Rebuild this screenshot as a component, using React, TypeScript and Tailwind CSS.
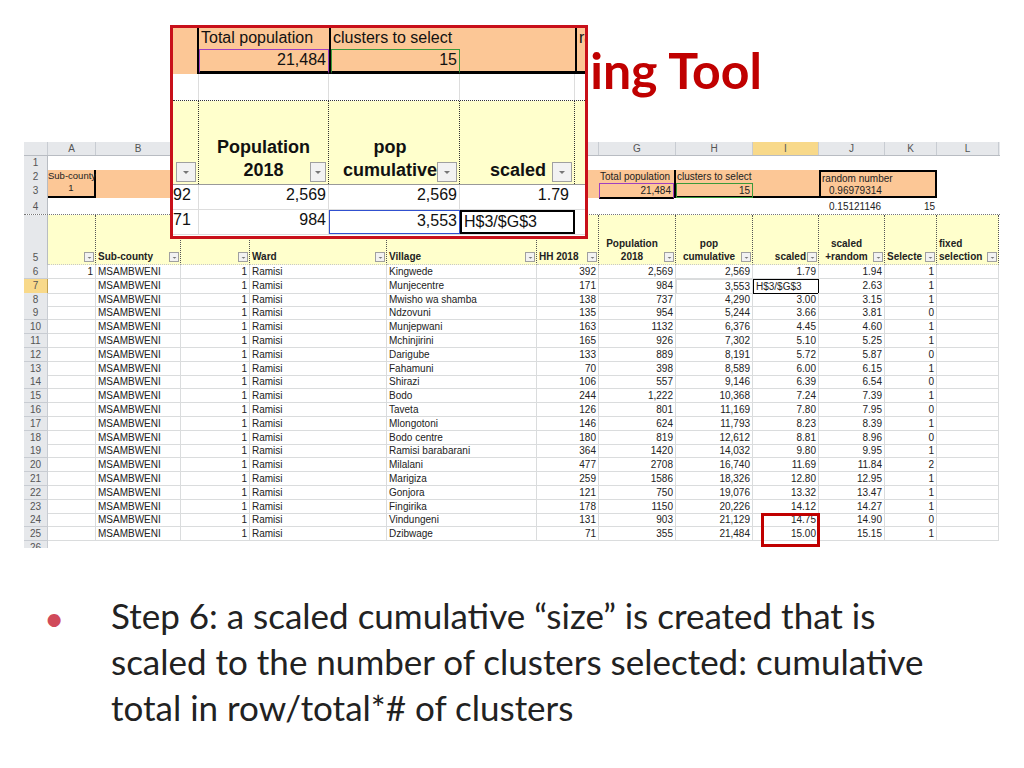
import React from "react";

const rows: string[][] = [
  ["Kingwede","392","2,569","2,569","1.79","1.94","1"],
  ["Munjecentre","171","984","3,553","","2.63","1"],
  ["Mwisho wa shamba","138","737","4,290","3.00","3.15","1"],
  ["Ndzovuni","135","954","5,244","3.66","3.81","0"],
  ["Munjepwani","163","1132","6,376","4.45","4.60","1"],
  ["Mchinjirini","165","926","7,302","5.10","5.25","1"],
  ["Darigube","133","889","8,191","5.72","5.87","0"],
  ["Fahamuni","70","398","8,589","6.00","6.15","1"],
  ["Shirazi","106","557","9,146","6.39","6.54","0"],
  ["Bodo","244","1,222","10,368","7.24","7.39","1"],
  ["Taveta","126","801","11,169","7.80","7.95","0"],
  ["Mlongotoni","146","624","11,793","8.23","8.39","1"],
  ["Bodo centre","180","819","12,612","8.81","8.96","0"],
  ["Ramisi barabarani","364","1420","14,032","9.80","9.95","1"],
  ["Milalani","477","2708","16,740","11.69","11.84","2"],
  ["Marigiza","259","1586","18,326","12.80","12.95","1"],
  ["Gonjora","121","750","19,076","13.32","13.47","1"],
  ["Fingirika","178","1150","20,226","14.12","14.27","1"],
  ["Vindungeni","131","903","21,129","14.75","14.90","0"],
  ["Dzibwage","71","355","21,484","15.00","15.15","1"],
];

const cols = "grid grid-cols-[24px_48px_85px_69px_137px_150px_62px_77px_77px_66px_66px_52px_62px]";
const cell = "border-r border-b border-[#dadcdd] px-[2px] whitespace-nowrap overflow-hidden";

function Filter({ big }: { big?: boolean }) {
  return (
    <span className={`inline-flex items-center justify-center border border-[#a0a0a0] bg-[#f2f2f2] ${big ? "w-[20px] h-[20px]" : "w-[10px] h-[10px]"}`}>
      <svg viewBox="0 0 8 8" className={big ? "w-[8px] h-[8px]" : "w-[5px] h-[5px]"}><path d="M1 3h6L4 6z" fill="#777" /></svg>
    </span>
  );
}

function HeadCell({ text, align = "center" }: { text: React.ReactNode; align?: string }) {
  return (
    <div className={`relative h-[50px] border-r border-dotted border-[#555] bg-[#ffffcc] border-b border-b-[#c8c8c8] flex items-end pb-[1px] font-bold text-[10px] leading-[13px] pl-[2px] ${align === "center" ? "justify-center text-center" : align === "right" ? "justify-end" : "justify-start"}`}>
      <div className="pr-[12px] whitespace-nowrap">{text}</div>
      <div className="absolute right-[1px] bottom-[2px] flex"><Filter /></div>
    </div>
  );
}

export default function App() {
  const f = { fontFamily: '"Liberation Sans", Arial, sans-serif' };
  return (
    <div className="relative w-[1024px] h-[768px] bg-white overflow-hidden" style={{ fontFamily: "Lato, sans-serif" }}>
      <div className="h-[142px] flex items-start justify-end pr-[262px] pt-[40px]">
        <div className="text-[50px] font-bold text-[#c00000] leading-[60px]">Sampling Tool</div>
      </div>

      <div className="ml-[24px] w-[976px] h-[406px] overflow-hidden text-[10px] leading-[13px] text-[#222]" style={f}>
        <div className={`${cols} h-[14px] bg-[#e6e8eb] text-[#555] text-center border-b border-[#b8bcc2]`}>
          {["", "A", "B", "C", "D", "E", "F", "G", "H", "I", "J", "K", "L"].map((c, i) => (
            <div key={i} className={`border-r border-[#c8ccd2] ${c === "I" ? "bg-[#f8d98a]" : ""}`}>{c}</div>
          ))}
        </div>
        <div className={`${cols} h-[14px]`}>
          <div className="bg-[#e6e8eb] text-center text-[#555] border-r border-[#b8bcc2]">1</div>
        </div>
        <div className="flex h-[28px]">
          <div className="w-[24px] bg-[#e6e8eb] text-center text-[#555] border-r border-[#b8bcc2] flex flex-col"><div className="h-[14px]">2</div><div>3</div></div>
          <div className="w-[48px] bg-[#fcc796] border-r-2 border-b-2 border-black text-center text-[9.5px] leading-[12px] whitespace-nowrap overflow-visible">Sub-county<br />1</div>
          <div className="w-[503px] bg-[#fcc796]" />
          <div className="w-[77px] bg-[#fcc796] border-r-2 border-black flex flex-col">
            <div className="h-[13px] pl-[1px] whitespace-nowrap">Total population</div>
            <div className="flex-1 text-right pr-[2px] border border-[#a040c0] border-b-2 border-b-black">21,484</div>
          </div>
          <div className="w-[143px] bg-[#fcc796] flex flex-col border-b-2 border-black">
            <div className="h-[13px] pl-[1px] whitespace-nowrap">clusters to select</div>
            <div className="w-[77px] flex-1 text-right pr-[2px] border border-[#3a9a3a]">15</div>
          </div>
          <div className="w-[118px] bg-[#fcc796] border-2 border-black flex flex-col">
            <div className="h-[12px] pl-[1px] whitespace-nowrap">random number</div>
            <div className="pl-[8px]">0.96979314</div>
          </div>
        </div>
        <div className={`${cols} h-[17px] border-b border-dotted border-[#777]`}>
          <div className="bg-[#e6e8eb] text-center text-[#555] border-r border-[#b8bcc2] pt-[2px]">4</div>
          <div /><div /><div /><div /><div /><div /><div /><div /><div />
          <div className="pl-[10px] pt-[2px]">0.15121146</div>
          <div className="text-right pr-[2px] pt-[2px]">15</div>
          <div />
        </div>
        <div className={cols}>
          <div className="h-[50px] bg-[#e6e8eb] text-center text-[#555] border-r border-[#b8bcc2] flex items-end justify-center pb-[1px]">5</div>
          <HeadCell text="" />
          <HeadCell text="Sub-county" align="left" />
          <HeadCell text="" />
          <HeadCell text="Ward" align="left" />
          <HeadCell text="Village" align="left" />
          <HeadCell text="HH 2018" align="left" />
          <HeadCell text={<>Population<br />2018</>} />
          <HeadCell text={<>pop<br />cumulative</>} />
          <HeadCell text="scaled" align="right" />
          <HeadCell text={<>scaled<br />+random</>} />
          <HeadCell text="Selecte" align="left" />
          <HeadCell text={<>fixed<br />selection</>} align="left" />
        </div>
        {rows.map((r, i) => (
          <div key={i} className={`${cols} h-[13.8px] leading-[13px]`}>
            <div className={`text-center border-r border-b ${i === 1 ? "bg-[#f8d98a] border-[#c0a050]" : "bg-[#e6e8eb] border-[#c8ccd2]"} text-[#555]`}>{i + 6}</div>
            <div className={`${cell} text-right`}>{i === 0 ? "1" : ""}</div>
            <div className={cell}>MSAMBWENI</div>
            <div className={`${cell} text-right`}>1</div>
            <div className={cell}>Ramisi</div>
            <div className={cell}>{r[0]}</div>
            <div className={`${cell} text-right`}>{r[1]}</div>
            <div className={`${cell} text-right`}>{r[2]}</div>
            <div className={`${cell} text-right ${i === 1 ? "border border-[#3050d0]" : ""}`}>{r[3]}</div>
            <div className={i === 1 ? "border border-black px-[2px] whitespace-nowrap" : `${cell} text-right`}>{i === 1 ? "H$3/$G$3" : r[4]}</div>
            <div className={`${cell} text-right`}>{r[5]}</div>
            <div className={`${cell} text-right`}>{r[6]}</div>
            <div className={cell} />
          </div>
        ))}
        <div className={`${cols} h-[14px]`}>
          <div className="text-center bg-[#e6e8eb] text-[#555] border-r border-[#c8ccd2]">26</div>
        </div>
      </div>

      <div className="absolute left-[761px] top-[513px] w-[59px] h-[34px] border-[3px] border-[#c00000]" />

      <div className="absolute left-[170px] top-[25px] w-[418px] h-[214px] border-[3px] border-[#c8101a] bg-white overflow-hidden text-[16px] leading-[20px] text-[#111]" style={f}>
        <div className="flex h-[46px] bg-[#fcc796]">
          <div className="w-[26px] border-r-2 border-black" />
          <div className="w-[130px] flex flex-col">
            <div className="h-[21px] pl-[2px] whitespace-nowrap">Total population</div>
            <div className="flex-1 text-right pr-[2px] border border-[#a040c0] border-b-[3px] border-b-black">21,484</div>
          </div>
          <div className="w-[131px] flex flex-col border-l-2 border-black">
            <div className="h-[21px] pl-[2px] whitespace-nowrap">clusters to select</div>
            <div className="flex-1 text-right pr-[2px] border border-[#3a9a3a] border-b-[3px] border-b-black">15</div>
          </div>
          <div className="w-[115px] border-b-[3px] border-black" />
          <div className="flex-1 border-l-2 border-black border-b-[3px] pl-[2px] overflow-hidden">ra</div>
        </div>
        <div className="flex h-[27px] border-b border-dotted border-[#333]">
          <div className="w-[26px] border-r border-[#ddd]" />
          <div className="w-[130px] border-r border-[#ddd]" />
          <div className="w-[131px] border-r border-[#ddd]" />
          <div className="w-[115px] border-r border-[#ddd]" />
        </div>
        <div className="flex h-[84px] bg-[#ffffcc] border-b border-[#999] font-bold text-[18px] leading-[23px]">
          <div className="w-[26px] border-r border-dotted border-[#333] flex items-end justify-center pb-[2px]"><Filter big /></div>
          <div className="w-[130px] border-r border-dotted border-[#333] flex items-end justify-between pb-[2px] pl-[18px] pr-[2px]"><div className="text-center">Population<br />2018</div><Filter big /></div>
          <div className="w-[131px] border-r border-dotted border-[#333] flex items-end justify-between pb-[2px] pl-[14px] pr-[2px]"><div className="text-center">pop<br />cumulative</div><Filter big /></div>
          <div className="w-[115px] border-r border-dotted border-[#333] flex items-end justify-end gap-[6px] pb-[2px] pr-[2px]"><div>scaled</div><Filter big /></div>
          <div className="flex-1" />
        </div>
        <div className="flex h-[25px] border-b border-[#ddd]">
          <div className="w-[26px] border-r border-[#ddd] overflow-hidden">92</div>
          <div className="w-[130px] border-r border-[#ddd] text-right pr-[2px]">2,569</div>
          <div className="w-[131px] border-r border-[#ddd] text-right pr-[2px]">2,569</div>
          <div className="w-[115px] text-right pr-[6px]">1.79</div>
        </div>
        <div className="flex h-[25px] border-b border-[#ddd]">
          <div className="w-[26px] border-r border-[#ddd] overflow-hidden">71</div>
          <div className="w-[130px] border-r border-[#ddd] text-right pr-[2px]">984</div>
          <div className="w-[131px] border border-[#3050d0] text-right pr-[2px]">3,553</div>
          <div className="w-[115px] border-2 border-black pl-[2px] overflow-hidden whitespace-nowrap">H$3/$G$3</div>
        </div>
        <div className="flex h-[25px] text-[#111]">
          <div className="w-[26px]">90</div>
          <div className="w-[130px] text-right pr-[2px]">737</div>
          <div className="w-[131px] text-right pr-[2px]">4,290</div>
          <div className="w-[115px] text-right pr-[6px]">3.00</div>
        </div>
      </div>

      <div className="flex mt-[44px] text-[35px] leading-[46px] text-[#222]">
        <div className="w-[111px] pl-[44px] pt-[2px] text-[#d04a5a]">•</div>
        <div className="w-[845px]">Step 6: a scaled cumulative “size” is created that is scaled to the number of clusters selected: cumulative total in row/total*# of clusters</div>
      </div>
    </div>
  );
}
